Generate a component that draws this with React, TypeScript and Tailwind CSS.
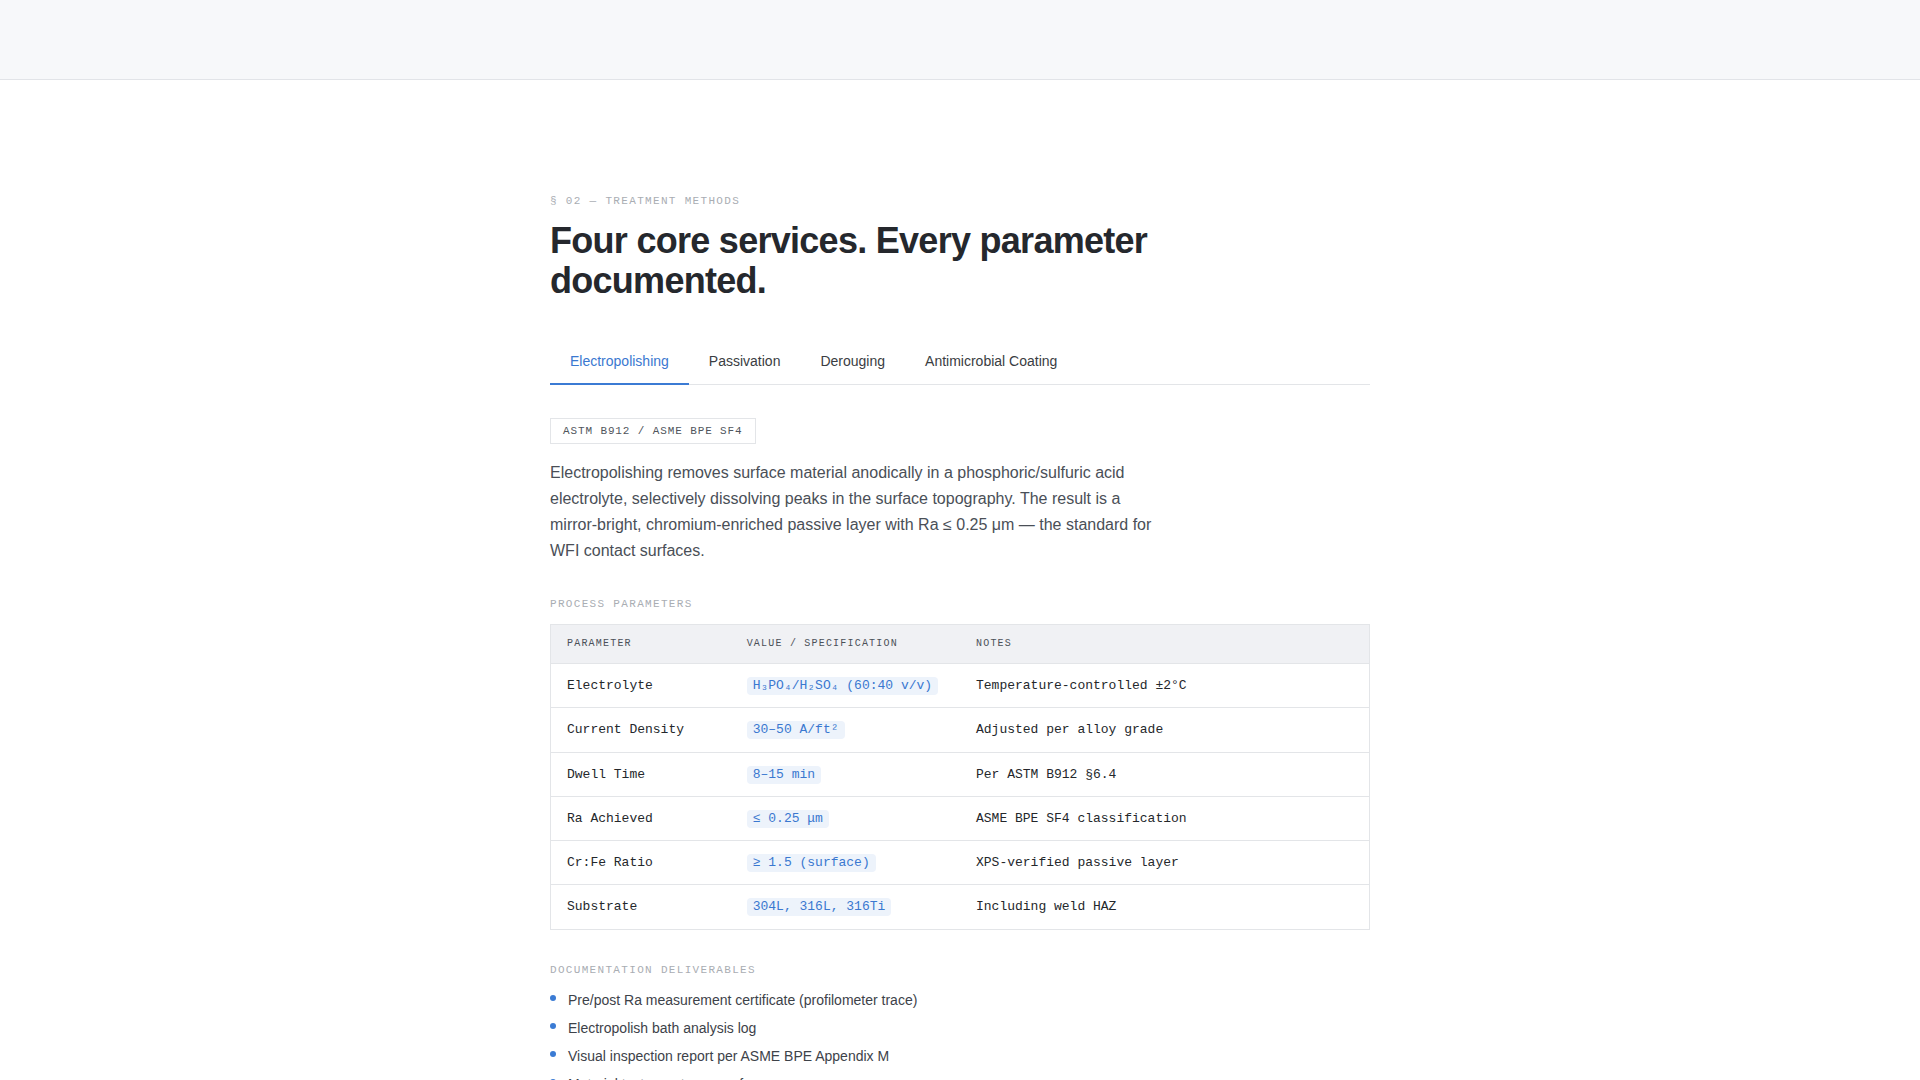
import { useState } from "react";

const tabs = ["Electropolishing", "Passivation", "Derouging", "Antimicrobial Coating"];

const rows = [
  { param: "Electrolyte", value: "H₃PO₄/H₂SO₄ (60:40 v/v)", note: "Temperature-controlled ±2°C" },
  { param: "Current Density", value: "30–50 A/ft²", note: "Adjusted per alloy grade" },
  { param: "Dwell Time", value: "8–15 min", note: "Per ASTM B912 §6.4" },
  { param: "Ra Achieved", value: "≤ 0.25 μm", note: "ASME BPE SF4 classification" },
  { param: "Cr:Fe Ratio", value: "≥ 1.5 (surface)", note: "XPS-verified passive layer" },
  { param: "Substrate", value: "304L, 316L, 316Ti", note: "Including weld HAZ" },
];

const deliverables = [
  "Pre/post Ra measurement certificate (profilometer trace)",
  "Electropolish bath analysis log",
  "Visual inspection report per ASME BPE Appendix M",
  "Material test report cross-reference",
];

export default function App() {
  const [active, setActive] = useState(0);

  return (
    <div className="min-h-screen bg-white font-['Liberation_Sans',Arial,sans-serif]">
      {/* Top bar */}
      <header className="h-20 bg-[#f7f8fa] border-b border-[#e2e4e8]" />

      <main className="w-[820px] mx-auto pt-[113px] pb-24">
        <p className="font-['Liberation_Mono',monospace] text-[11px] leading-4 tracking-[0.12em] uppercase text-[#a9adb3]">
          § 02 — Treatment Methods
        </p>
        <h2 className="mt-3 max-w-[680px] text-[36px] leading-[1.1] font-bold tracking-[-0.02em] text-[#25282d]">
          Four core services. Every parameter documented.
        </h2>

        {/* Tabs */}
        <div className="mt-[39px] flex border-b border-[#e3e5e8]">
          {tabs.map((t, i) => (
            <button
              key={t}
              onClick={() => setActive(i)}
              className={`-mb-px px-5 py-3 text-[14px] leading-5 border-b-2 ${
                i === active
                  ? "border-[#3b7bd4] text-[#3a78d0]"
                  : "border-transparent text-[#3a3d42]"
              }`}
            >
              {t}
            </button>
          ))}
        </div>

        <span className="mt-[33px] inline-block border border-[#e3e5e8] px-3 py-1 font-['Liberation_Mono',monospace] text-[11px] leading-4 tracking-[0.08em] text-[#50555c]">
          ASTM B912 / ASME BPE SF4
        </span>

        <p className="mt-4 max-w-[620px] text-[16px] leading-[26px] text-[#4a4f57]">
          Electropolishing removes surface material anodically in a phosphoric/sulfuric acid
          electrolyte, selectively dissolving peaks in the surface topography. The result is a
          mirror-bright, chromium-enriched passive layer with Ra ≤ 0.25 μm — the standard for WFI
          contact surfaces.
        </p>

        <p className="mt-8 font-['Liberation_Mono',monospace] text-[11px] leading-4 tracking-[0.12em] uppercase text-[#a9adb3]">
          Process Parameters
        </p>

        <table className="mt-3 w-full border-collapse border border-[#e3e5e8] font-['Liberation_Mono',monospace] text-left">
          <thead>
            <tr className="bg-[#f0f1f4] border-b border-[#e3e5e8]">
              <th className="w-[22%] px-4 py-3 text-[10px] leading-[14px] font-normal tracking-[0.12em] uppercase text-[#4b5058]">
                Parameter
              </th>
              <th className="w-[28%] px-4 py-3 text-[10px] leading-[14px] font-normal tracking-[0.12em] uppercase text-[#4b5058]">
                Value / Specification
              </th>
              <th className="px-4 py-3 text-[10px] leading-[14px] font-normal tracking-[0.12em] uppercase text-[#4b5058]">
                Notes
              </th>
            </tr>
          </thead>
          <tbody>
            {rows.map((r) => (
              <tr key={r.param} className="border-b border-[#e3e5e8]">
                <td className="px-4 py-3 text-[13px] leading-[19.25px] text-[#24272b]">{r.param}</td>
                <td className="px-4 py-3 text-[13px] leading-[19.25px]">
                  <span className="inline-block rounded-sm bg-[#edf3fb] px-1.5 py-px leading-4 text-[#3a78d0]">
                    {r.value}
                  </span>
                </td>
                <td className="px-4 py-3 text-[13px] leading-[19.25px] text-[#24272b]">{r.note}</td>
              </tr>
            ))}
          </tbody>
        </table>

        <p className="mt-8 font-['Liberation_Mono',monospace] text-[11px] leading-4 tracking-[0.12em] uppercase text-[#a9adb3]">
          Documentation Deliverables
        </p>
        <ul className="mt-3 space-y-2">
          {deliverables.map((d) => (
            <li key={d} className="flex items-start gap-3 text-[14px] leading-5 text-[#3d4249]">
              <span className="mt-[5px] h-1.5 w-1.5 shrink-0 rounded-full bg-[#3b7bd4]" />
              {d}
            </li>
          ))}
        </ul>
      </main>
    </div>
  );
}
